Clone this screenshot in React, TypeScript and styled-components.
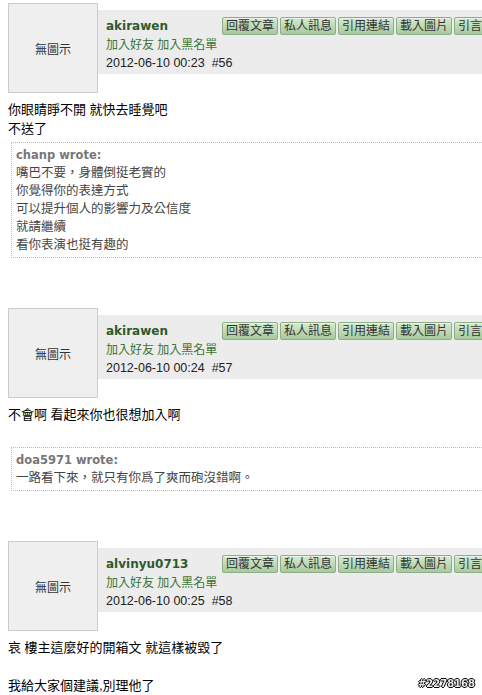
import { createGlobalStyle } from 'styled-components'
import styled from 'styled-components'

const cjk = '"Liberation Sans", "Noto Sans CJK TC", sans-serif'
const verdana = '"DejaVu Sans", Verdana, "Noto Sans CJK TC", sans-serif'

const buttons = ['回覆文章', '私人訊息', '引用連結', '載入圖片', '引言回覆']

type Quote = { author: string; lines: string[] }
type Post = {
	name: string
	date: string
	floor: number
	body: string[]
	quote?: Quote
}

const posts: Post[] = [
	{
		name: 'akirawen',
		date: '2012-06-10 00:23',
		floor: 56,
		body: ['你眼睛睜不開 就快去睡覺吧', '不送了'],
		quote: {
			author: 'chanp',
			lines: [
				'嘴巴不要，身體倒挺老實的',
				'你覺得你的表達方式',
				'可以提升個人的影響力及公信度',
				'就請繼續',
				'看你表演也挺有趣的',
			],
		},
	},
	{
		name: 'akirawen',
		date: '2012-06-10 00:24',
		floor: 57,
		body: ['不會啊 看起來你也很想加入啊', ''],
		quote: {
			author: 'doa5971',
			lines: ['一路看下來，就只有你爲了爽而砲沒錯啊。'],
		},
	},
	{
		name: 'alvinyu0713',
		date: '2012-06-10 00:25',
		floor: 58,
		body: ['哀 樓主這麼好的開箱文 就這樣被毀了', '', '我給大家個建議,別理他了'],
	},
]

export default function App() {
	return (
		<>
			<GlobalStyle />
			<Page>
				{posts.map(post => (
					<PostBlock key={post.floor}>
						<Header>
							<Avatar>無圖示</Avatar>
							<Panel>
								<TopRow>
									<UserName>{post.name}</UserName>
									<ButtonBar>
										{buttons.map(label => (
											<ActionButton key={label}>{label}</ActionButton>
										))}
									</ButtonBar>
								</TopRow>
								<LinkRow>
									<span>加入好友</span> <span>加入黑名單</span>
								</LinkRow>
								<DateRow>
									{post.date}&nbsp; #{post.floor}
								</DateRow>
							</Panel>
						</Header>
						<Body>
							{post.body.map((line, i) => (
								<BodyLine key={i}>{line}</BodyLine>
							))}
						</Body>
						{post.quote && (
							<QuoteBox>
								<QuoteAuthor>{post.quote.author} wrote:</QuoteAuthor>
								{post.quote.lines.map(line => (
									<QuoteLine key={line}>{line}</QuoteLine>
								))}
							</QuoteBox>
						)}
					</PostBlock>
				))}
			</Page>
			<Watermark>#2278168</Watermark>
		</>
	)
}

const GlobalStyle = createGlobalStyle`
	html, body {
		margin: 0;
		padding: 0;
		overflow: hidden;
		background: #fff;
	}
	body {
		font-family: ${cjk};
		color: #000;
	}
`

const Page = styled.div`
	width: 720px;
	padding: 3px 0 0 8px;
`

const PostBlock = styled.div`
	margin-bottom: 50px;

	&:last-child {
		margin-bottom: 0;
	}
`

const Header = styled.div`
	display: flex;
	align-items: flex-start;
`

const Avatar = styled.div`
	width: 90px;
	height: 90px;
	box-sizing: border-box;
	border: 1px solid #cccccc;
	background: #efefef;
	display: flex;
	align-items: center;
	justify-content: center;
	font-size: 12px;
	color: #333;
	flex-shrink: 0;
`

const Panel = styled.div`
	flex: 1;
	margin-top: 7px;
	height: 64px;
	box-sizing: border-box;
	padding: 6px 0 0 8px;
	background: #ececec;
`

const TopRow = styled.div`
	display: flex;
	align-items: center;
	height: 20px;
`

const UserName = styled.div`
	width: 116px;
	font-family: ${verdana};
	font-weight: bold;
	font-size: 12px;
	color: #2e5a2c;
`

const ButtonBar = styled.div`
	display: flex;
	gap: 2px;
`

const ActionButton = styled.div`
	height: 18px;
	box-sizing: border-box;
	padding: 0 3px;
	border: 1px solid #8eae88;
	border-radius: 2px;
	background: linear-gradient(#d6eacf, #a7ca9e);
	box-shadow: inset 0 1px 0 rgba(255, 255, 255, 0.5);
	font-size: 12px;
	line-height: 16px;
	color: #333;
	white-space: nowrap;
`

const LinkRow = styled.div`
	font-size: 12px;
	line-height: 18px;
	color: #3a7535;
`

const DateRow = styled.div`
	font-size: 12.5px;
	line-height: 18px;
	color: #222;
`

const Body = styled.div`
	margin-top: 7px;
	font-size: 13px;
	line-height: 19px;
`

const BodyLine = styled.div`
	min-height: 19px;
`

const QuoteBox = styled.div`
	margin: 4px 0 0 3px;
	border: 1px dotted #bdbdbd;
	padding: 3px 4px;
	line-height: 18px;
`

const QuoteAuthor = styled.div`
	font-family: ${verdana};
	font-weight: bold;
	font-size: 11.5px;
	color: #777;
`

const QuoteLine = styled.div`
	font-size: 12.5px;
	color: #444;
`

const Watermark = styled.div`
	position: fixed;
	right: 7px;
	bottom: 5px;
	font-family: ${verdana};
	font-weight: bold;
	font-size: 10px;
	line-height: 12px;
	color: #e8e8e8;
	text-shadow: 1px 0 #000, -1px 0 #000, 0 1px #000, 0 -1px #000;
`
